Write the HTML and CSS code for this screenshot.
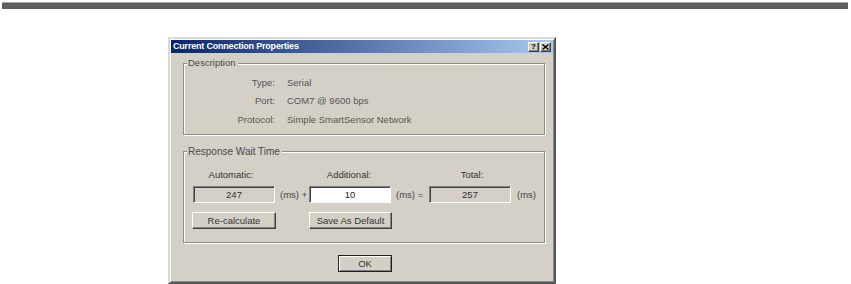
FILE: index.html
```html
<!DOCTYPE html>
<html>
<head>
<meta charset="utf-8">
<link rel="stylesheet" href="styles.css">
</head>
<body>
<div class="topbar"></div>
<div class="dialog">
  <div class="titlebar">
    <span class="title">Current Connection Properties</span>
    <span class="tbtns">
      <span class="tbtn">?</span>
      <span class="tbtn close">
        <svg width="7" height="6" viewBox="0 0 7 6"><path d="M0.5 0.5 L6.5 5.5 M6.5 0.5 L0.5 5.5" stroke="#000" stroke-width="1.4"/></svg>
      </span>
    </span>
  </div>
  <div class="dbody">
    <fieldset class="group desc">
      <legend>Description</legend>
      <div class="kv">
        <span class="k">Type:</span><span class="v">Serial</span>
        <span class="k">Port:</span><span class="v">COM7 @ 9600 bps</span>
        <span class="k">Protocol:</span><span class="v">Simple SmartSensor Network</span>
      </div>
    </fieldset>
    <fieldset class="group resp">
      <legend>Response Wait Time</legend>
      <div class="rgrid">
        <span class="hdr c1">Automatic:</span>
        <span class="hdr c3">Additional:</span>
        <span class="hdr c5">Total:</span>
        <span class="field">247</span>
        <span class="unit">(ms) +</span>
        <span class="field input">10</span>
        <span class="unit">(ms) =</span>
        <span class="field">257</span>
        <span class="unit last">(ms)</span>
        <span class="btn recalc">Re-calculate</span>
        <span class="btn save">Save As Default</span>
      </div>
    </fieldset>
    <div class="okrow"><span class="btn ok">OK</span></div>
  </div>
</div>
</body>
</html>
```
FILE: styles.css
```css
html, body {
  margin: 0;
  padding: 0;
  background: #fff;
  font-family: "Liberation Sans", Arial, sans-serif;
  font-size: 9.5px;
  color: #3c3c3c;
  overflow: hidden;
}
.topbar {
  margin: 2px 3px 0 2px;
  height: 6px;
  background: #5d5d5d;
  border-top: 1px solid #a8a8a8;
}
.dialog {
  margin: 28px 0 0 168px;
  width: 388px;
  height: 247px;
  box-sizing: border-box;
  background: #d4d0c8;
  border: 2px solid;
  border-color: #dcdad4 #555 #555 #dcdad4;
  box-shadow: inset 1px 1px 0 #fff, inset -1px -1px 0 #8a8a8a;
  padding: 1px;
}
.titlebar {
  height: 13px;
  background: linear-gradient(to right, #0a246a, #a6caf0);
  display: flex;
  align-items: center;
  justify-content: space-between;
  padding: 0 2px 0 2px;
}
.title {
  color: #fff;
  font-weight: bold;
  font-size: 9px;
  letter-spacing: -0.2px;
  line-height: 13px;
}
.tbtns {
  display: flex;
  gap: 1px;
}
.tbtn {
  width: 11px;
  height: 10px;
  box-sizing: border-box;
  background: #d4d0c8;
  border: 1px solid;
  border-color: #fff #404040 #404040 #fff;
  box-shadow: inset -1px -1px 0 #808080;
  color: #000;
  font-weight: bold;
  font-size: 8px;
  line-height: 8px;
  text-align: center;
  display: flex;
  align-items: center;
  justify-content: center;
}
.dbody {
  padding: 4px 8px 0 12px;
}
.group {
  margin: 0;
  padding: 0;
  border: 1px solid #8c8c8c;
  box-shadow: inset 1px 1px 0 #fff, 1px 1px 0 #fff;
  min-width: 0;
}
.group legend {
  padding: 0 2px 0 1px;
  margin-left: 3px;
  line-height: 12px;
  background: #d4d0c8;
  color: #4a4a4a;
}
.desc {
  padding: 4px 0 5px 0;
}
.kv {
  display: grid;
  grid-template-columns: 91px 1fr;
  column-gap: 12px;
  grid-auto-rows: 18.5px;
  align-items: center;
  color: #555;
}
.k { text-align: right; }
.resp {
  margin-top: 11px;
  padding: 11px 0 13px 9px;
}
.resp legend {
  margin-left: -6px;
  font-size: 10px;
}
.rgrid {
  display: grid;
  grid-template-columns: 82px 34px 82px 38px 82px auto;
  grid-template-rows: 12px 17px 21px;
  row-gap: 5px;
  align-items: center;
}
.rgrid .btn { grid-row: 3; align-self: end; }
.hdr { grid-row: 1; text-align: center; line-height: 12px; color: #333; }
.hdr.c1 { grid-column: 1; margin-right: 6px; }
.hdr.c3 { grid-column: 3; margin-right: 2px; }
.hdr.c5 { grid-column: 5; margin-left: 4px; }
.field {
  grid-row: 2;
  height: 17px;
  box-sizing: border-box;
  border: 1px solid;
  border-color: #808080 #fff #fff #808080;
  box-shadow: inset 1px 1px 0 #404040;
  background: #d4d0c8;
  text-align: center;
  line-height: 15px;
  color: #333;
}
.field.input { background: #fff; color: #222; }
.unit { grid-row: 2; padding-left: 5px; color: #444; }
.unit.last { padding-left: 6px; }
.btn {
  height: 17px;
  box-sizing: border-box;
  border: 1px solid;
  border-color: #fff #404040 #404040 #fff;
  box-shadow: inset -1px -1px 0 #808080;
  background: #d4d0c8;
  text-align: center;
  line-height: 15px;
  color: #333;
}
.recalc { grid-column: 1 / span 2; width: 84px; margin-left: -1px; justify-self: start; }
.save { grid-column: 3 / span 2; width: 83px; justify-self: start; }
.okrow {
  display: flex;
  justify-content: center;
  margin-top: 12px;
  padding-left: 2px;
}
.ok {
  width: 54px;
  border-color: #202020;
  box-shadow: inset 1px 1px 0 #fff, inset -1px -1px 0 #808080;
}
```
